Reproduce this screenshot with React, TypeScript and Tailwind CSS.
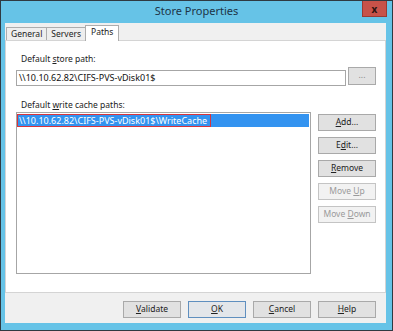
import React from 'react';

const font = { fontFamily: '"Noto Sans", "Open Sans", sans-serif' };

function U({ children }: { children: React.ReactNode }) {
  return <span className="underline underline-offset-1">{children}</span>;
}

function WinButton({
  children,
  disabled,
  isDefault,
  className = '',
}: {
  children: React.ReactNode;
  disabled?: boolean;
  isDefault?: boolean;
  className?: string;
}) {
  const look = disabled
    ? 'bg-[#f2f2f2] border-[#c4c4c4] text-[#9a9a9a]'
    : isDefault
    ? 'bg-[#e3e6ea] border-[#5f8fbf] text-[#222]'
    : 'bg-[#e1e1e1] border-[#a9a9a9] text-[#222]';
  return (
    <button
      className={`w-[58px] h-[17px] border flex items-center justify-center text-[8.5px] leading-none ${look} ${className}`}
    >
      {children}
    </button>
  );
}

export default function App() {
  const tabs = ['General', 'Servers'];

  return (
    <div
      className="w-[393px] h-[331px] bg-[#66c3e7] border border-[#2f3a42] flex flex-col overflow-hidden"
      style={font}
    >
      {/* Title bar */}
      <div className="h-[22px] grid grid-cols-[1fr_auto_1fr] items-start">
        <div />
        <div className="text-[11px] text-[#1d3346] pt-[4px] leading-none">Store Properties</div>
        <div className="flex justify-end pr-[5px]">
          <div className="w-[25px] h-[17px] -mt-[1px] bg-[#c75249] border border-[#9a3a33] flex items-center justify-center text-[10px] font-bold text-[#2a1210] leading-none">
            x
          </div>
        </div>
      </div>

      {/* Window body */}
      <div className="ml-[4px] w-[381px] h-[300px] flex flex-col bg-[#f0f0f0]">
        {/* Tab strip */}
        <div className="h-[17px] flex items-end pl-[1px] relative z-10">
          {tabs.map((t) => (
            <div
              key={t}
              className="h-[13px] px-[4px] border border-b-0 border-[#adadad] -mr-[1px] bg-[#eeeeee] text-[8.5px] text-[#222] flex items-center leading-none"
            >
              {t}
            </div>
          ))}
          <div className="h-[16px] -mb-[1px] px-[5px] border border-b-0 border-[#adadad] bg-white text-[8.5px] text-[#222] flex items-start pt-[2px] leading-none">
            Paths
          </div>
        </div>

        {/* Tab page */}
        <div className="h-[253px] bg-white border border-[#d4d4d4] flex flex-col pl-[10px] pr-[9px]">
          <div className="text-[8.5px] text-[#222] mt-[14px] leading-none pl-[5px]">
            Default <U>s</U>tore path:
          </div>
          <div className="flex items-start mt-[3px] gap-[2px]">
            <div className="w-[330px] h-[16px] mt-[3px] border border-[#a6a6a6] text-[9px] text-[#111] pl-[2px] flex items-center leading-none">
              \\10.10.62.82\CIFS-PVS-vDisk01$
            </div>
            <WinButton className="!w-[28px] h-[18px] text-[#888]">...</WinButton>
          </div>

          <div className="text-[8.5px] text-[#222] mt-[15px] leading-none pl-[5px]">
            Default <U>w</U>rite cache paths:
          </div>
          <div className="flex items-start mt-[3px] gap-[7px]">
            <div className="w-[295px] h-[162px] border border-[#a6a6a6] p-[1px]">
              <div className="h-[13px] bg-[#3393f0] text-white text-[9px] flex items-center pl-[1px] leading-none">
                <span className="outline outline-1 outline-[#d8343c] outline-offset-[1px] pr-[2px]">
                  \\10.10.62.82\CIFS-PVS-vDisk01$\WriteCache
                </span>
              </div>
            </div>
            <div className="flex flex-col gap-[6px] mt-[2px]">
              <WinButton>
                <U>A</U>dd...
              </WinButton>
              <WinButton>
                E<U>d</U>it...
              </WinButton>
              <WinButton className="border-[#707070]">
                <U>R</U>emove
              </WinButton>
              <WinButton disabled>
                Move&nbsp;<U>U</U>p
              </WinButton>
              <WinButton disabled>
                Move&nbsp;<U>D</U>own
              </WinButton>
            </div>
          </div>
        </div>

        {/* Bottom buttons */}
        <div className="flex-1 flex items-start justify-end gap-[7px] pr-[10px] pt-[8px]">
          <WinButton>
            <U>V</U>alidate
          </WinButton>
          <WinButton isDefault>
            <U>O</U>K
          </WinButton>
          <WinButton>
            <U>C</U>ancel
          </WinButton>
          <WinButton>
            <U>H</U>elp
          </WinButton>
        </div>
      </div>
    </div>
  );
}
